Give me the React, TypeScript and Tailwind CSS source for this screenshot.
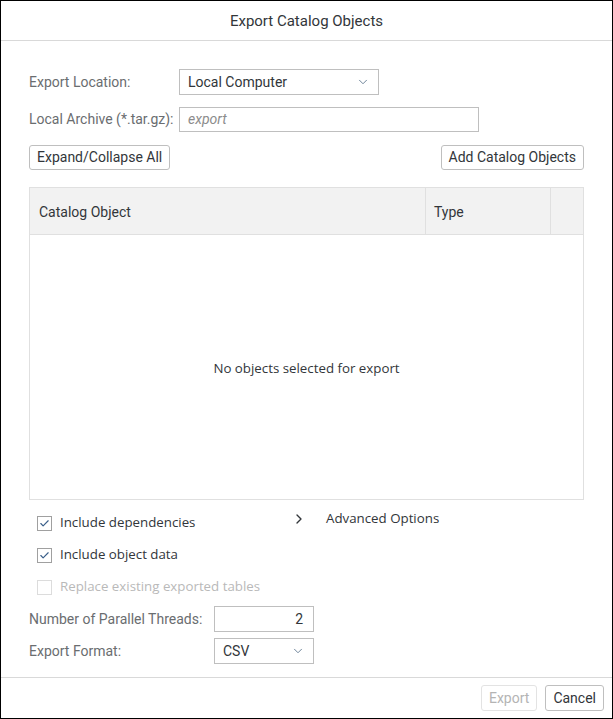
import { ChevronDown, ChevronRight, Check } from "lucide-react";

function Select({ value, width }: { value: string; width: string }) {
  return (
    <div
      className={`flex h-[26px] ${width} items-center justify-between border border-[#bfbfbf] bg-white pl-[8px] pr-[8px] text-[14px] text-[#32363a]`}
    >
      <span>{value}</span>
      <ChevronDown className="h-[14px] w-[14px] text-[#5b738b]" strokeWidth={1.5} />
    </div>
  );
}

function CheckRow({
  label,
  checked,
  disabled,
}: {
  label: string;
  checked?: boolean;
  disabled?: boolean;
}) {
  return (
    <div className="flex h-[32px] items-center pl-[8px]">
      <span
        className={`flex h-[15px] w-[15px] items-center justify-center border bg-white ${
          disabled ? "border-[#dcdcdc]" : "border-[#a0a0a0]"
        }`}
      >
        {checked && <Check className="h-[11px] w-[11px] text-[#3a5f8a]" strokeWidth={2.5} />}
      </span>
      <span
        className={`ml-[8px] font-['Open_Sans',sans-serif] text-[13.3px] ${
          disabled ? "text-[#b9b9b9]" : "text-[#32363a]"
        }`}
      >
        {label}
      </span>
    </div>
  );
}

export default function App() {
  return (
    <div className="h-[719px] w-[613px] font-['Roboto',sans-serif]">
      <div className="flex h-full w-full flex-col border border-black bg-white">
        <div className="flex h-[40px] shrink-0 items-center justify-center border-b border-[#d9d9d9] pt-[1px] text-[15px] text-[#32363a]">
          Export Catalog Objects
        </div>

        <div className="flex flex-1 flex-col px-[28px] pt-[28px]">
          <div className="flex items-center">
            <span className="w-[150px] text-[14px] text-[#6a6d70]">Export Location:</span>
            <Select value="Local Computer" width="w-[200px]" />
          </div>
          <div className="mt-[12px] flex items-center">
            <span className="w-[150px] text-[14px] text-[#6a6d70]">Local Archive (*.tar.gz):</span>
            <div className="flex h-[25px] w-[300px] items-center border border-[#bfbfbf] pl-[8px] text-[14px] italic text-[#8c8c8c]">
              export
            </div>
          </div>

          <div className="mt-[13px] flex items-center justify-between">
            <button
              type="button"
              className="h-[25px] rounded-[3px] border border-[#bfbfbf] bg-white px-[7px] text-[14px] text-[#32363a]"
            >
              Expand/Collapse All
            </button>
            <button
              type="button"
              className="h-[25px] rounded-[3px] border border-[#bfbfbf] bg-white px-[7px] text-[14px] text-[#32363a]"
            >
              Add Catalog Objects
            </button>
          </div>

          <div className="mt-[17px] flex h-[313px] flex-col border border-[#e0e0e0]">
            <div className="flex h-[47px] shrink-0 border-b border-[#e0e0e0] bg-[#f2f2f2] text-[14px] text-[#32363a]">
              <div className="flex flex-1 items-center border-r border-[#e0e0e0] pl-[9px] pt-[2px]">Catalog Object</div>
              <div className="flex w-[125px] items-center border-r border-[#e0e0e0] pl-[8px] pt-[2px]">Type</div>
              <div className="w-[32px]" />
            </div>
            <div className="flex flex-1 items-center justify-center pt-[3px] font-['Open_Sans',sans-serif] text-[13.3px] text-[#32363a]">
              No objects selected for export
            </div>
          </div>

          <div className="mt-[7px] flex">
            <div className="w-[262px]">
              <CheckRow label="Include dependencies" checked />
              <CheckRow label="Include object data" checked />
              <CheckRow label="Replace existing exported tables" disabled />
            </div>
            <div className="flex h-[24px] items-center">
              <ChevronRight className="h-[16px] w-[16px] text-[#32363a]" strokeWidth={2} />
              <span className="ml-[19px] font-['Open_Sans',sans-serif] text-[13.3px] text-[#32363a]">
                Advanced Options
              </span>
            </div>
          </div>

          <div className="mt-[3px] flex items-center">
            <span className="w-[185px] text-[14px] text-[#6a6d70]">Number of Parallel Threads:</span>
            <div className="flex h-[26px] w-[100px] items-center justify-end border border-[#bfbfbf] pr-[10px] text-[14px] text-[#32363a]">
              2
            </div>
          </div>
          <div className="mt-[6px] flex items-center">
            <span className="w-[185px] text-[14px] text-[#6a6d70]">Export Format:</span>
            <Select value="CSV" width="w-[100px]" />
          </div>
        </div>

        <div className="flex h-[41px] shrink-0 items-center justify-end gap-[8px] border-t border-[#d9d9d9] pr-[8px]">
          <button
            type="button"
            className="h-[26px] rounded-[3px] border border-[#e3e3e3] bg-white px-[7px] text-[14px] text-[#b4b4b4]"
          >
            Export
          </button>
          <button
            type="button"
            className="h-[26px] rounded-[3px] border border-[#bfbfbf] bg-white px-[7px] text-[14px] text-[#32363a]"
          >
            Cancel
          </button>
        </div>
      </div>
    </div>
  );
}
